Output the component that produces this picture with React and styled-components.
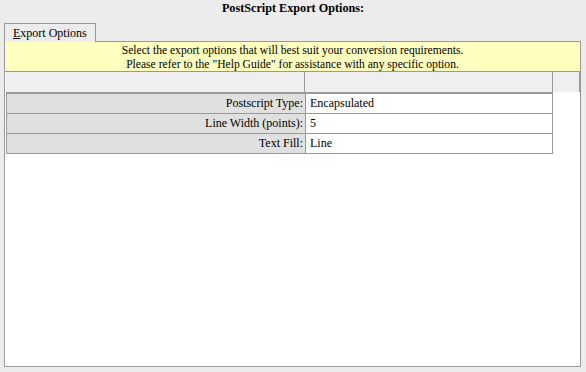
import React from 'react';
import styled, { createGlobalStyle } from 'styled-components';

const GlobalStyle = createGlobalStyle`
  body {
    margin: 0;
    background: #ececec;
    font-family: "Liberation Serif", "Times New Roman", serif;
    font-size: 12px;
    color: #000;
  }
`;

const Page = styled.div`
  width: 586px;
  height: 372px;
  display: flex;
  flex-direction: column;
`;

const Title = styled.div`
  height: 18px;
  line-height: 16px;
  text-align: center;
  font-weight: bold;
  font-size: 12.2px;
`;

const TabBar = styled.div`
  display: flex;
  padding: 5px 0 0 4px;
  position: relative;
  z-index: 1;
`;

const Tab = styled.div`
  width: 92px;
  height: 19px;
  box-sizing: border-box;
  border: 1px solid #999;
  border-bottom: none;
  background: #ececec;
  line-height: 19px;
  padding-left: 8px;
  margin-bottom: -1px;

  u {
    text-decoration: underline;
  }
`;

const Panel = styled.div`
  margin: 0 5px 0 4px;
  height: 324px;
  border: 1px solid #999;
  background: #fff;
  display: flex;
  flex-direction: column;
`;

const Banner = styled.div`
  background: #ffffc0;
  height: 30px;
  box-sizing: border-box;
  border-bottom: 1px solid #999;
  text-align: center;
  font-size: 11.6px;
  line-height: 14px;
  padding-top: 2px;
`;

const Content = styled.div`
  padding-left: 1px;
`;

const HeaderRow = styled.div`
  display: flex;
  height: 20px;
`;

const HeaderCell = styled.div`
  width: ${(p) => p.$w}px;
  background: #efefef;
  border-right: 1px solid #999;
`;

const OptionsTable = styled.div`
  display: grid;
  grid-template-columns: 299px 246px;
  width: fit-content;
  border: 1px solid #999;
  border-top-width: 2px;
  border-bottom: none;
`;

const Label = styled.div`
  height: 19px;
  line-height: 19px;
  background: #e0e0e0;
  text-align: right;
  padding-right: 2px;
  border-right: 1px solid #999;
  border-bottom: 1px solid #999;
`;

const Value = styled.div`
  height: 19px;
  line-height: 19px;
  padding-left: 4px;
  border-bottom: 1px solid #999;
`;

const options = [
  ['Postscript Type:', 'Encapsulated'],
  ['Line Width (points):', '5'],
  ['Text Fill:', 'Line'],
];

export default function App() {
  return (
    <>
      <GlobalStyle />
      <Page>
        <Title>PostScript Export Options:</Title>
        <TabBar>
          <Tab>
            <u>E</u>xport Options
          </Tab>
        </TabBar>
        <Panel>
          <Banner>
            Select the export options that will best suit your conversion requirements.
            <br />
            Please refer to the "Help Guide" for assistance with any specific option.
          </Banner>
          <Content>
            <HeaderRow>
              <HeaderCell $w={300} />
              <HeaderCell $w={248} />
              <HeaderCell $w={26} />
            </HeaderRow>
            <OptionsTable>
              {options.map(([label, value]) => (
                <React.Fragment key={label}>
                  <Label>{label}</Label>
                  <Value>{value}</Value>
                </React.Fragment>
              ))}
            </OptionsTable>
          </Content>
        </Panel>
      </Page>
    </>
  );
}
